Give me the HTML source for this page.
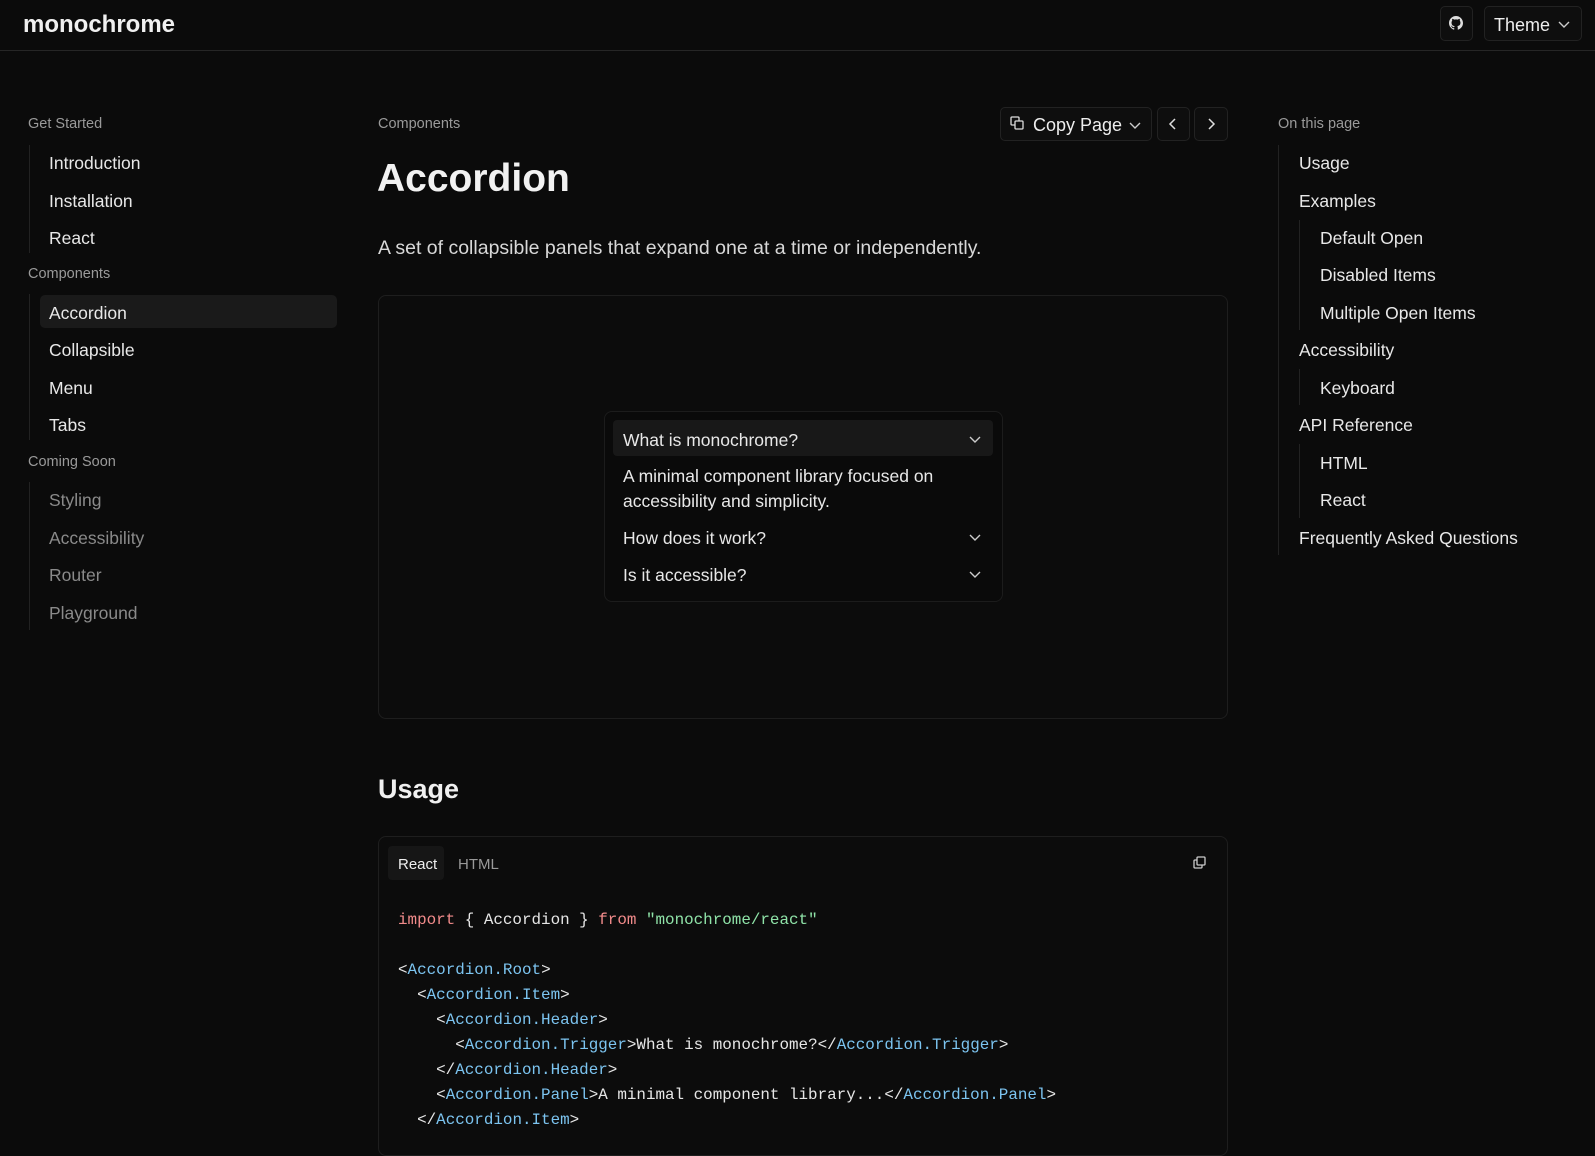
<!DOCTYPE html>
<html><head><meta charset="utf-8"><style>
*{box-sizing:border-box;margin:0;padding:0}
body{width:1595px;height:1137px;overflow:hidden;background:#0b0b0b;color:#ececec;font-family:"Liberation Sans",sans-serif;position:relative}
.a{position:absolute;white-space:nowrap}
.hdr{position:absolute;left:0;top:0;width:1595px;height:51px;border-bottom:1px solid #262626}
.btn{position:absolute;border:1px solid #222;border-radius:5px;background:#0e0e0e}
.lbl{font-size:14.5px;color:#9a9a9a}
.it{font-size:17.5px;color:#e8e8e8;line-height:20px}
.dim{color:#8a8a8a}
.vl{position:absolute;width:1px;background:#222}
.code{font-family:"Liberation Mono",monospace;font-size:15.9px;color:#e6e6e6;white-space:pre}
.k{color:#f28b8b}.s{color:#8fe3a8}.t{color:#7cc4f0}
</style></head><body>
<div class="hdr"></div>
<div class="a" style="left:23px;top:11px;font-size:24px;font-weight:600;color:#f0f0f0">monochrome</div>
<div class="btn" style="left:1440px;top:6px;width:33px;height:35px"></div>
<svg class="a" style="left:1449px;top:16px" width="14" height="14" viewBox="0 0 16 16"><path fill="#ddd" d="M8 0C3.6 0 0 3.6 0 8c0 3.5 2.3 6.5 5.5 7.6.4.1.5-.2.5-.4v-1.4c-2.2.5-2.7-1-2.7-1-.4-.9-.9-1.2-.9-1.2-.7-.5.1-.5.1-.5.8.1 1.2.8 1.2.8.7 1.2 1.9.9 2.3.7.1-.5.3-.9.5-1.1-1.8-.2-3.6-.9-3.6-4 0-.9.3-1.6.8-2.1-.1-.2-.4-1 .1-2.1 0 0 .7-.2 2.2.8.6-.2 1.3-.3 2-.3s1.4.1 2 .3c1.5-1 2.2-.8 2.2-.8.4 1.1.2 1.9.1 2.1.5.6.8 1.3.8 2.1 0 3.1-1.9 3.7-3.6 3.9.3.3.5.8.5 1.5v2.2c0 .2.1.5.6.4C13.7 14.5 16 11.5 16 8c0-4.4-3.6-8-8-8z"/></svg>
<div class="btn" style="left:1484px;top:6px;width:98px;height:35px"></div>
<div class="a" style="left:1494px;top:15px;font-size:18px;color:#eee">Theme</div>
<svg class="a" style="left:1558px;top:19px" width="12" height="10"><path d="M1 3l5 5 5-5" stroke="#ccc" stroke-width="1.4" fill="none"/></svg>

<div class="a lbl" style="left:28px;top:116px">Get Started</div>
<div class="vl" style="left:29px;top:145px;height:108px"></div>
<div class="a it" style="left:49px;top:153px">Introduction</div>
<div class="a it" style="left:49px;top:191px">Installation</div>
<div class="a it" style="left:49px;top:228px">React</div>
<div class="a lbl" style="left:28px;top:266px">Components</div>
<div class="vl" style="left:29px;top:294px;height:146px"></div>
<div class="a" style="left:40px;top:295px;width:297px;height:33px;background:#1a1a1a;border-radius:5px"></div>
<div class="a it" style="left:49px;top:303px">Accordion</div>
<div class="a it" style="left:49px;top:340px">Collapsible</div>
<div class="a it" style="left:49px;top:378px">Menu</div>
<div class="a it" style="left:49px;top:415px">Tabs</div>
<div class="a lbl" style="left:28px;top:454px">Coming Soon</div>
<div class="vl" style="left:29px;top:482px;height:148px"></div>
<div class="a it dim" style="left:49px;top:490px">Styling</div>
<div class="a it dim" style="left:49px;top:528px">Accessibility</div>
<div class="a it dim" style="left:49px;top:565px">Router</div>
<div class="a it dim" style="left:49px;top:603px">Playground</div>

<div class="a lbl" style="left:378px;top:116px">Components</div>
<div class="btn" style="left:1000px;top:107px;width:152px;height:34px"></div>
<svg class="a" style="left:1010px;top:116px" width="14" height="14"><rect x="1" y="1" width="8" height="8" rx="1" stroke="#ddd" fill="none" stroke-width="1.3"/><rect x="5" y="5" width="8" height="8" rx="1" stroke="#ddd" fill="#0e0e0e" stroke-width="1.3"/></svg>
<div class="a" style="left:1033px;top:115px;font-size:18px;color:#eee">Copy Page</div>
<svg class="a" style="left:1129px;top:120px" width="12" height="10"><path d="M1 3l5 5 5-5" stroke="#ccc" stroke-width="1.4" fill="none"/></svg>
<div class="btn" style="left:1157px;top:107px;width:33px;height:34px"></div>
<svg class="a" style="left:1168px;top:117px" width="10" height="14"><path d="M7 2L2 7l5 5" stroke="#ddd" stroke-width="1.5" fill="none"/></svg>
<div class="btn" style="left:1194px;top:107px;width:34px;height:34px"></div>
<svg class="a" style="left:1206px;top:117px" width="10" height="14"><path d="M3 2l5 5-5 5" stroke="#ddd" stroke-width="1.5" fill="none"/></svg>

<div class="a" style="left:377px;top:157px;font-size:39px;font-weight:700;color:#f2f2f2">Accordion</div>
<div class="a" style="left:378px;top:237px;font-size:19.5px;color:#d8d8d8">A set of collapsible panels that expand one at a time or independently.</div>

<div class="a" style="left:378px;top:295px;width:850px;height:424px;border:1px solid #1e1e1e;border-radius:8px;background:#0c0c0c"></div>
<div class="a" style="left:604px;top:411px;width:399px;height:191px;border:1px solid #1c1c1c;border-radius:8px;background:#0a0a0a"></div>
<div class="a" style="left:613px;top:420px;width:380px;height:36px;background:#181818;border-radius:4px"></div>
<div class="a it" style="left:623px;top:430px">What is monochrome?</div>
<div class="a it" style="left:623px;top:466px">A minimal component library focused on</div>
<div class="a it" style="left:623px;top:491px">accessibility and simplicity.</div>
<div class="a it" style="left:623px;top:528px">How does it work?</div>
<div class="a it" style="left:623px;top:565px">Is it accessible?</div>
<svg class="a" style="left:969px;top:434px" width="12" height="10"><path d="M1 3l5 5 5-5" stroke="#ccc" stroke-width="1.4" fill="none"/></svg>
<svg class="a" style="left:969px;top:532px" width="12" height="10"><path d="M1 3l5 5 5-5" stroke="#ccc" stroke-width="1.4" fill="none"/></svg>
<svg class="a" style="left:969px;top:569px" width="12" height="10"><path d="M1 3l5 5 5-5" stroke="#ccc" stroke-width="1.4" fill="none"/></svg>

<div class="a" style="left:378px;top:774px;font-size:27px;font-weight:700;color:#f0f0f0">Usage</div>

<div class="a" style="left:378px;top:836px;width:850px;height:320px;border:1px solid #1e1e1e;border-radius:8px;background:#0c0c0c"></div>
<div class="a" style="left:388px;top:846px;width:56px;height:34px;background:#161616;border-radius:4px"></div>
<div class="a" style="left:398px;top:856px;font-size:15px;color:#eee">React</div>
<div class="a" style="left:458px;top:856px;font-size:15px;color:#999">HTML</div>
<svg class="a" style="left:1193px;top:856px" width="14" height="14"><rect x="1" y="4" width="8" height="8" rx="1" stroke="#ccc" fill="none" stroke-width="1.3"/><rect x="4" y="1" width="8" height="8" rx="1" stroke="#ccc" fill="#0c0c0c" stroke-width="1.3"/></svg>
<div class="a code" style="left:398px;top:908px;line-height:25px"><span class="k">import</span> { Accordion } <span class="k">from</span> <span class="s">"monochrome/react"</span>

&lt;<span class="t">Accordion.Root</span>&gt;
  &lt;<span class="t">Accordion.Item</span>&gt;
    &lt;<span class="t">Accordion.Header</span>&gt;
      &lt;<span class="t">Accordion.Trigger</span>&gt;What is monochrome?&lt;/<span class="t">Accordion.Trigger</span>&gt;
    &lt;/<span class="t">Accordion.Header</span>&gt;
    &lt;<span class="t">Accordion.Panel</span>&gt;A minimal component library...&lt;/<span class="t">Accordion.Panel</span>&gt;
  &lt;/<span class="t">Accordion.Item</span>&gt;</div>

<div class="a lbl" style="left:1278px;top:116px">On this page</div>
<div class="vl" style="left:1278px;top:145px;height:410px"></div>
<div class="a it" style="left:1299px;top:153px">Usage</div>
<div class="a it" style="left:1299px;top:191px">Examples</div>
<div class="vl" style="left:1299px;top:220px;height:110px"></div>
<div class="a it" style="left:1320px;top:228px">Default Open</div>
<div class="a it" style="left:1320px;top:265px">Disabled Items</div>
<div class="a it" style="left:1320px;top:303px">Multiple Open Items</div>
<div class="a it" style="left:1299px;top:340px">Accessibility</div>
<div class="vl" style="left:1299px;top:369px;height:36px"></div>
<div class="a it" style="left:1320px;top:378px">Keyboard</div>
<div class="a it" style="left:1299px;top:415px">API Reference</div>
<div class="vl" style="left:1299px;top:444px;height:74px"></div>
<div class="a it" style="left:1320px;top:453px">HTML</div>
<div class="a it" style="left:1320px;top:490px">React</div>
<div class="a it" style="left:1299px;top:528px">Frequently Asked Questions</div>
</body></html>
